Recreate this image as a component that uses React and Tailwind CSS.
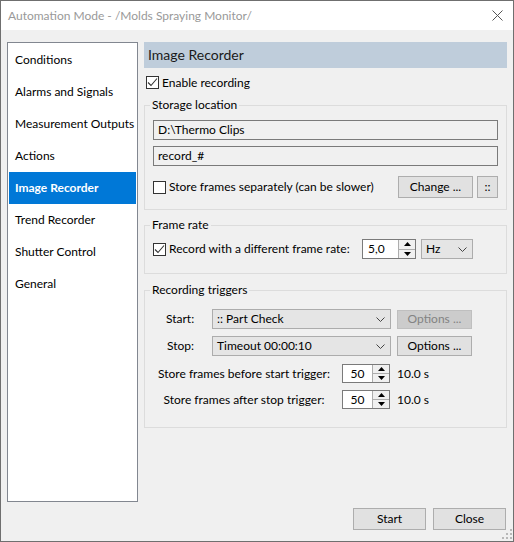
import React from 'react';

const NAV = [
  'Conditions',
  'Alarms and Signals',
  'Measurement Outputs',
  'Actions',
  'Image Recorder',
  'Trend Recorder',
  'Shutter Control',
  'General',
];

function Checkbox({ checked }) {
  return (
    <span className="w-[13px] h-[13px] border border-[#333333] bg-white flex items-center justify-center shrink-0">
      {checked && (
        <svg width="11" height="11" viewBox="0 0 11 11">
          <polyline points="1,5.5 4,8.5 10,1.5" fill="none" stroke="#333333" strokeWidth="1.1" />
        </svg>
      )}
    </span>
  );
}

function Chevron() {
  return (
    <svg width="9" height="5" viewBox="0 0 9 5" className="shrink-0">
      <polyline points="0.5,0.5 4.5,4.5 8.5,0.5" fill="none" stroke="#444444" strokeWidth="1" />
    </svg>
  );
}

function Button({ children, w, h = 'h-[22px]', disabled }) {
  return (
    <div
      className={
        'flex items-center justify-center border ' +
        (disabled ? 'bg-[#cccccc] border-[#bfbfbf] text-[#838383]' : 'bg-[#e1e1e1] border-[#adadad]') +
        ' ' + w + ' ' + h
      }
    >
      {children}
    </div>
  );
}

function Spin({ value, w, h, center }) {
  return (
    <div className={'flex border border-[#7a7a7a] bg-white ' + w + ' ' + h}>
      <div className={'flex-1 flex items-center ' + (center ? 'justify-center' : 'pl-[5px]')}>{value}</div>
      <div className="w-[17px] flex flex-col border-l border-[#adadad] bg-[#f0f0f0]">
        <div className="flex-1 flex items-center justify-center border-b border-[#adadad]">
          <svg width="7" height="4" viewBox="0 0 7 4"><polygon points="3.5,0 7,4 0,4" fill="#000" /></svg>
        </div>
        <div className="flex-1 flex items-center justify-center">
          <svg width="7" height="4" viewBox="0 0 7 4"><polygon points="0,0 7,0 3.5,4" fill="#000" /></svg>
        </div>
      </div>
    </div>
  );
}

function Select({ value, w }) {
  return (
    <div className={'h-[20px] flex items-center justify-between border border-[#acacac] bg-[#e5e5e5] pl-[4px] pr-[5px] ' + w}>
      <span>{value}</span>
      <Chevron />
    </div>
  );
}

function Group({ title, children, className }) {
  return (
    <fieldset className={'border border-[#dcdcdc] ' + className}>
      <legend className="-ml-[3px] px-[2px] leading-[16px]">{title}</legend>
      {children}
    </fieldset>
  );
}

export default function App() {
  return (
    <div className="w-[514px] h-[542px] border border-[#6f6f6f] flex flex-col bg-[#f0f0f0] text-[12px] leading-[16px] text-black font-['Lato',sans-serif]">
      <div className="h-[29px] shrink-0 bg-white flex items-center justify-between pl-[7px] pr-[10px]">
        <span className="text-[#999999]">Automation Mode - /Molds Spraying Monitor/</span>
        <svg width="11" height="11" viewBox="0 0 11 11">
          <path d="M0.5 0.5 L10.5 10.5 M10.5 0.5 L0.5 10.5" stroke="#555555" strokeWidth="1" />
        </svg>
      </div>

      <div className="relative flex-1 flex flex-col px-[6px] pt-[12px]">
        <div className="flex gap-[6px]">
          <div className="w-[131px] h-[460px] border border-[#828790] bg-white p-[1px]">
            {NAV.map((item) => (
              <div
                key={item}
                className={
                  'h-[32px] flex items-center pl-[6px] ' +
                  (item === 'Image Recorder' ? 'bg-[#0078d7] text-white font-bold' : '')
                }
              >
                {item}
              </div>
            ))}
          </div>

          <div className="w-[363px] flex flex-col">
            <div className="h-[26px] bg-[#bfcddb] flex items-center pl-[4px] text-[14px] text-[#1a1a1a]">
              Image Recorder
            </div>

            <div className="mt-[8px] ml-[2px] h-[13px] flex items-center gap-[3px]">
              <Checkbox checked />
              <span>Enable recording</span>
            </div>

            <Group title="Storage location" className="mt-[8px] px-[8px] pt-[7px] pb-[11px]">
              <div className="h-[20px] border border-[#7a7a7a] bg-[#f0f0f0] flex items-center pl-[4px]">
                D:\Thermo Clips
              </div>
              <div className="mt-[6px] h-[20px] border border-[#7a7a7a] bg-[#f0f0f0] flex items-center pl-[4px]">
                record_#
              </div>
              <div className="mt-[10px] flex items-center">
                <div className="flex items-center gap-[3px]">
                  <Checkbox />
                  <span>Store frames separately (can be slower)</span>
                </div>
                <div className="ml-auto flex gap-[4px]">
                  <Button w="w-[75px]">Change ...</Button>
                  <Button w="w-[21px]">::</Button>
                </div>
              </div>
            </Group>

            <Group title="Frame rate" className="mt-[7px] px-[8px] pt-[6px] pb-[14px]">
              <div className="flex items-center">
                <div className="w-[209px] flex items-center gap-[3px]">
                  <Checkbox checked />
                  <span>Record with a different frame rate:</span>
                </div>
                <Spin value="5,0" w="w-[54px]" h="h-[20px]" />
                <div className="ml-[5px]">
                  <Select value="Hz" w="w-[52px]" />
                </div>
              </div>
            </Group>

            <Group title="Recording triggers" className="mt-[8px] px-[8px] pt-[11px] pb-[18px]">
              <div className="flex items-center">
                <div className="w-[59px] pl-[13px]">Start:</div>
                <Select value=":: Part Check" w="w-[179px]" />
                <div className="ml-[6px]">
                  <Button w="w-[75px]" h="h-[19px]" disabled>Options ...</Button>
                </div>
              </div>
              <div className="mt-[7px] flex items-center">
                <div className="w-[59px] pl-[14px]">Stop:</div>
                <Select value="Timeout 00:00:10" w="w-[179px]" />
                <div className="ml-[6px]">
                  <Button w="w-[75px]" h="h-[20px]">Options ...</Button>
                </div>
              </div>
              <div className="mt-[8px] flex items-center">
                <div className="w-[182px] text-center">Store frames before start trigger:</div>
                <div className="ml-[7px]">
                  <Spin value="50" w="w-[48px]" h="h-[19px]" center />
                </div>
                <span className="ml-[7px]">10.0 s</span>
              </div>
              <div className="mt-[7px] flex items-center">
                <div className="w-[182px] text-center">Store frames after stop trigger:</div>
                <div className="ml-[7px]">
                  <Spin value="50" w="w-[48px]" h="h-[19px]" center />
                </div>
                <span className="ml-[7px]">10.0 s</span>
              </div>
            </Group>
          </div>
        </div>

        <div className="mt-[6px] mr-[1px] flex justify-end gap-[7px]">
          <Button w="w-[73px]">Start</Button>
          <Button w="w-[73px]">Close</Button>
        </div>

        <svg className="absolute right-[1px] bottom-[2px]" width="10" height="10" viewBox="0 0 10 10">
          <rect x="8" y="0" width="2" height="2" fill="#b8b8b8" />
          <rect x="4" y="4" width="2" height="2" fill="#b8b8b8" />
          <rect x="8" y="4" width="2" height="2" fill="#b8b8b8" />
          <rect x="0" y="8" width="2" height="2" fill="#b8b8b8" />
          <rect x="4" y="8" width="2" height="2" fill="#b8b8b8" />
          <rect x="8" y="8" width="2" height="2" fill="#b8b8b8" />
        </svg>
      </div>
    </div>
  );
}
